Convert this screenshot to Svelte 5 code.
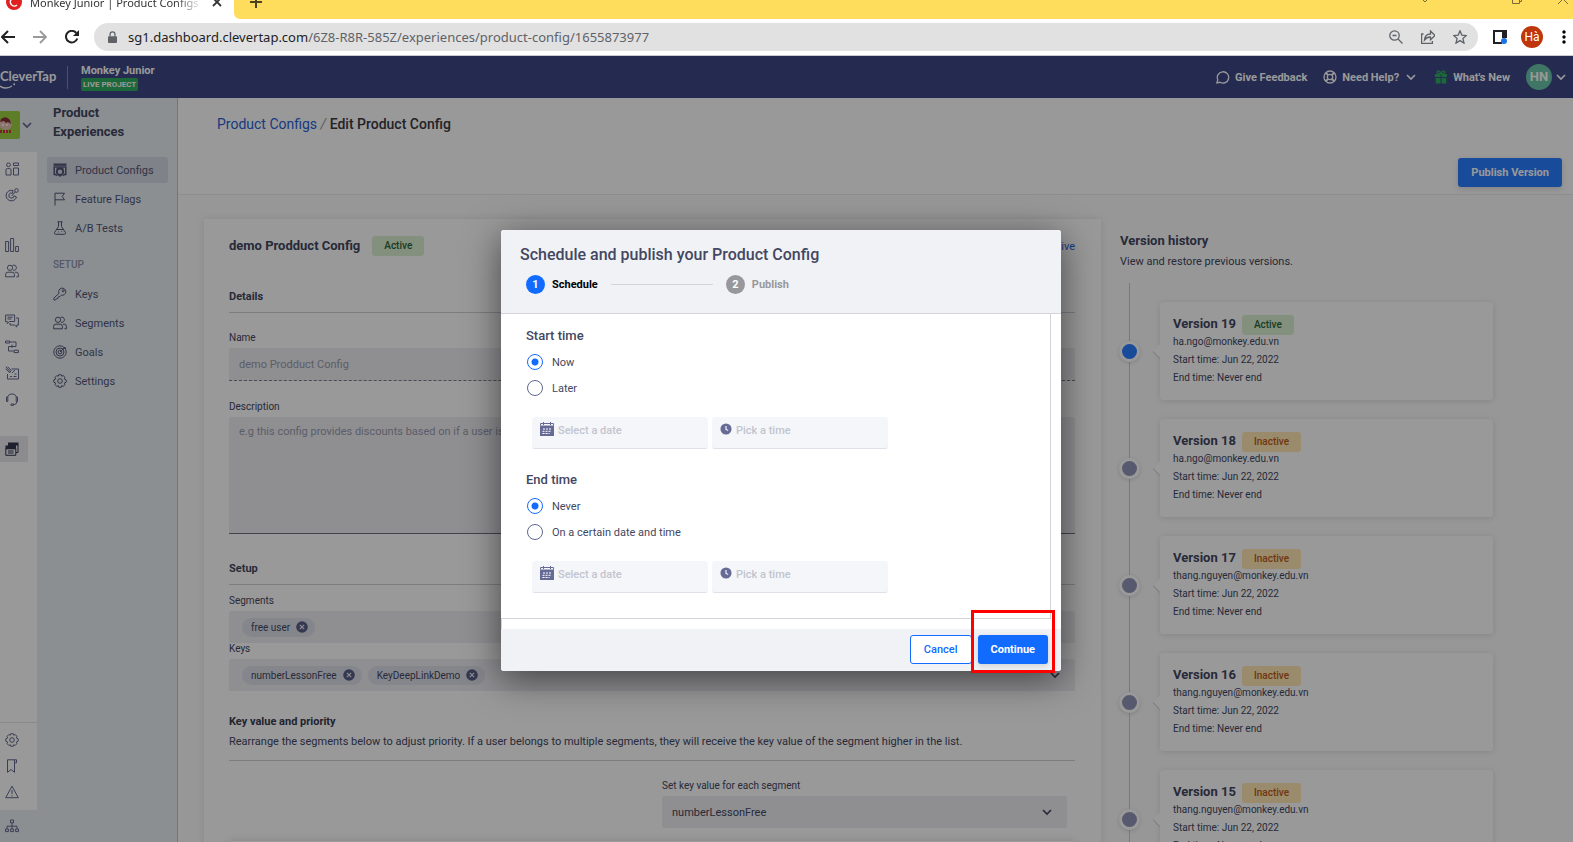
<script>
  const railGroups = [
    ['dash', 'target'],
    ['bars', 'users'],
    ['chat', 'journey', 'campaign', 'headset'],
    ['pages']
  ];
  const railBottom = ['gear', 'bookmark', 'warning'];

  const productLinks = [
    { icon: 'config', label: 'Product Configs' },
    { icon: 'flag', label: 'Feature Flags' },
    { icon: 'flask', label: 'A/B Tests' }
  ];
  const setupLinks = [
    { icon: 'key', label: 'Keys' },
    { icon: 'users', label: 'Segments' },
    { icon: 'goals', label: 'Goals' },
    { icon: 'gear', label: 'Settings' }
  ];

  const versions = [
    { number: 19, active: true, email: 'ha.ngo@monkey.edu.vn' },
    { number: 18, active: false, email: 'ha.ngo@monkey.edu.vn' },
    { number: 17, active: false, email: 'thang.nguyen@monkey.edu.vn' },
    { number: 16, active: false, email: 'thang.nguyen@monkey.edu.vn' },
    { number: 15, active: false, email: 'thang.nguyen@monkey.edu.vn' }
  ];

  let segments = $state(['free user']);
  let keys = $state(['numberLessonFree', 'KeyDeepLinkDemo']);
  let start = $state('now');
  let end = $state('never');
</script>

{#snippet icon(name)}
  <svg class="icon" viewBox="0 0 14 14" aria-hidden="true">
    {#if name === 'dash'}
      <circle cx="3.5" cy="2.8" r="1.9" /><path d="M1 13V8q0-1.500 1.500-1.500h2Q6 6.500 6 8v5zM8.500 1h5v2.500h-5zM8.500 6h5v7h-5z" />
    {:else if name === 'target'}
      <path d="M8 2.500A5.300 5.300 0 1 0 11.500 9L9 7.800A2.600 2.600 0 1 1 7.500 5.200zM6.500 8l4-4.300" /><circle cx="11.500" cy="2.500" r="1.800" />
    {:else if name === 'bars'}
      <path d="M.6 3.500h3v10h-3zM5.600.5h3v13h-3zM10.600 8.500h3v5h-3z" />
    {:else if name === 'users'}
      <circle cx="5" cy="3.8" r="2.600" /><path d="M7.500 1.500a2.600 2.600 0 1 1 .5 4.700M.6 12.800v-2.300q0-2.300 2.300-2.300h4.200q2.300 0 2.300 2.300v2.300zM10 8.200h1.200q2.200 0 2.200 2.300v2.300h-2" />
    {:else if name === 'chat'}
      <path d="M.6 1h9v6.500H4.500l-2.300 2v-2H.6zM2.500 3.200h5M2.500 5h4M11 4h2.400v7h-1.600v2l-2.300-2H5V9" />
    {:else if name === 'journey'}
      <path d="M.6 1h4v2h-4zM4.600 2H11v4.500H3.500V11h5M9 10.200h4.400v2.400H9zM7 4.500V8M5.500 6.500h3" />
    {:else if name === 'campaign'}
      <path d="M6.500 3h7v10h-11V8M.8.800l5 5.500M2.500.6l3.700 3.900L4.500 6.600.6 2.700M7 7l3-3M5 10.500h2M8.500 10.500h3M9.500 8h2" />
    {:else if name === 'headset'}
      <path d="M2.500 5A4.800 4.800 0 0 1 11.500 5M2.800 5H1.500v4.500h1.300zM12.500 5h-1.300v4.500h1.300zM12 9.500q0 3-3.500 3.200M6 12h2.500v1.300H6z" />
    {:else if name === 'pages'}
      <path class="solid" d="M3 .5h10.500v3H3zM.5 3.500H11v3.700H.5z" /><path d="M.8 6.500h10v6.800H.8zM13 3v7.500h-2M3 9h5.500M3 11h5.500" />
    {:else if name === 'gear'}
      <path d="M5.800.7h2.400l.5 1.500 1.500-.6 1.800 1.800-.7 1.500 1.900.9v2.400l-1.900.9.7 1.500-1.800 1.800-1.500-.7-.5 1.600H5.800l-.5-1.600-1.500.7L2 10.600l.7-1.500L.8 8.200V5.800l1.900-.9L2 3.400l1.800-1.800 1.500.6z" /><circle cx="7" cy="7" r="2.300" />
    {:else if name === 'bookmark'}
      <path d="M2.500.8h9v3h-2v9.500L6 10.500l-3.500 2.800zM9.500.8v3" />
    {:else if name === 'warning'}
      <path d="M7 1.200l6.300 11.500H.7zM7 5v4M7 10.200v1.200" />
    {:else if name === 'tree'}
      <path d="M5.500 1h3v2.800h-3zM7 3.800V10M2 10V7.200h10V10M.6 10h2.800v2.600H.6zM5.600 10h2.800v2.600H5.600zM10.600 10h2.800v2.600h-2.800z" />
    {:else if name === 'config'}
      <path class="solid" d="M.5.500h13v2.300H.5z" /><path d="M3 11.500H1.200V4h11.600v7.500H11" stroke-width="1.500" /><circle cx="7" cy="8.800" r="3.200" stroke-width="2" /><path d="M3.500 5.500h7M7 12v1.800M4 11.800l-1 1M10 11.800l1 1" stroke-width="1.500" />
    {:else if name === 'flag'}
      <path d="M2 13.500V1M2 1.200h9.500L9.200 4.500l2.300 3.300H2" />
    {:else if name === 'flask'}
      <path d="M4.500.8h5M5.500.8v4.700l-4 6q-.6 1.700 1.200 1.800h8.600q1.800-.1 1.200-1.800l-4-6V.8M3.600 8.500h6.800M5 11h.8M8.500 10.500h.8" />
    {:else if name === 'key'}
      <path d="M6 6.300A3.600 3.600 0 1 1 8.300 8.200L7 9.500 5.500 9.800 5 11.300l-1.500.4L2.500 13H.9v-1.900z" /><circle cx="10.200" cy="3.800" r="1" />
    {:else if name === 'goals'}
      <circle cx="7" cy="7" r="6.200" /><circle cx="7" cy="7" r="4" /><circle cx="7" cy="7" r="1.900" /><path d="M7 7l5-5M10.500 3.500l2.700-.7" />
    {:else if name === 'chevron'}
      <path d="M3 5l4 4 4-4" stroke-width="1.700" />
    {:else if name === 'remove'}
      <circle class="solid" cx="7" cy="7" r="6.800" /><path class="cross" d="M4.500 4.500l5 5M9.500 4.500l-5 5" />
    {:else if name === 'calendar'}
      <path class="solid" d="M0 3.500h14V14H0z" /><path d="M.5 3.500V1.500h13v2M3.500 0v3M10.500 0v3" />
      <path class="dots" d="M3 7h9M2.500 9.300h9M2.500 11.500h7" />
    {:else if name === 'clock'}
      <circle class="solid" cx="7" cy="7" r="6.500" /><path class="cross" d="M7 3.500V7.500l2.500 1.200" />
    {/if}
  </svg>
{/snippet}

{#snippet schedule(name)}
  <div class="pickers">
    <label class="picker">
      <span class="picker-icon">{@render icon('calendar')}</span>
      <input type="text" placeholder="Select a date" aria-label="{name} date" />
    </label>
    <label class="picker">
      <span class="picker-icon small">{@render icon('clock')}</span>
      <input type="text" placeholder="Pick a time" aria-label="{name} hour" />
    </label>
  </div>
{/snippet}

{#snippet tag(text)}
  <span class="tag">{text}<button class="tag-remove" aria-label="Remove {text}">{@render icon('remove')}</button></span>
{/snippet}

<div class="screen">
  <div class="tabstrip">
    <div class="tab">
      <svg class="favicon" viewBox="0 0 16 16"><circle cx="8" cy="8" r="8" fill="#e02020" /><path d="M11 5a4 4 0 1 0 0 6" fill="none" stroke="#fff" stroke-width="1.500" /></svg>
      <span class="tab-title">Monkey Junior | Product Configs</span>
      <button class="tab-close" aria-label="Close tab"><svg viewBox="0 0 10 10"><path d="M1 1l8 8M9 1l-8 8" stroke="#333" stroke-width="1.800" /></svg></button>
    </div>
    <div class="tab-rest">
      <button class="tab-new" aria-label="New tab"><svg viewBox="0 0 12 12"><path d="M6 0v12M0 6h12" stroke="#4c4320" stroke-width="2" /></svg></button>
      <div class="window-buttons">
        <svg viewBox="0 0 10 10"><path d="M1 4l4 4 4-4" /></svg>
        <svg viewBox="0 0 10 10"></svg>
        <svg viewBox="0 0 10 10"><path d="M.5 2.500h7v7h-7zM2.500 2.500v-2h7v7h-2" /></svg>
        <svg viewBox="0 0 10 10"><path d="M0 0l10 10M10 0L0 10" /></svg>
      </div>
    </div>
  </div>

  <div class="toolbar">
    <div class="nav-buttons">
      <button aria-label="Back"><svg viewBox="0 0 14 14"><path d="M14 7H1M7 1L1 7l6 6" fill="none" stroke="#222" stroke-width="2" /></svg></button>
      <button aria-label="Forward"><svg viewBox="0 0 14 14"><path d="M0 7h13M7 1l6 6-6 6" fill="none" stroke="#999" stroke-width="1.800" /></svg></button>
      <button aria-label="Reload"><svg viewBox="0 0 14 14"><path d="M12.300 8.500A5.800 5.800 0 1 1 11.300 3" fill="none" stroke="#222" stroke-width="2" /><path d="M14 0v6H8z" fill="#222" /></svg></button>
    </div>
    <div class="address">
      <svg class="lock" viewBox="0 0 10 14"><path d="M1 5.500h8q1 0 1 1V12q0 1-1 1H1q-1 0-1-1V6.500q0-1 1-1z" fill="#5f6368" /><path d="M2.300 6V3.500a2.700 2.700 0 0 1 5.400 0V6" fill="none" stroke="#5f6368" stroke-width="1.400" /></svg>
      <span class="url"><b>sg1.dashboard.clevertap.com</b>/6Z8-R8R-585Z/experiences/product-config/1655873977</span>
      <svg class="bar-icon" viewBox="0 0 14 14"><circle cx="5.500" cy="5.500" r="4.700" /><path d="M9 9l4.500 4.500M3.500 5.500h4" /></svg>
      <svg class="bar-icon" viewBox="0 0 14 14"><path d="M2.500 4H.6v9.400h10.800v-2.500M3.500 10q.5-6 6-6V1l4.500 4.500-4.500 4.200V7q-3.500-.2-6 3z" /></svg>
      <svg class="bar-icon" viewBox="0 0 14 14"><path d="M7 .8l1.800 4.300 4.600.4-3.500 3 1.100 4.600-4-2.500-4 2.500 1.100-4.600-3.500-3 4.600-.4z" /></svg>
    </div>
    <svg class="panel" viewBox="0 0 14 14"><path d="M0 0h14v14H0z" fill="#202124" /><path d="M2 2h7v10H2z" fill="#fff" /><path d="M9 8h5v6H9z" fill="#fff" /><circle cx="11" cy="11" r="3" fill="#1a73e8" /></svg>
    <button class="profile">Hà</button>
    <button class="dots-menu" aria-label="Menu"><svg viewBox="0 0 4 14"><circle cx="2" cy="2" r="1.700" /><circle cx="2" cy="7" r="1.700" /><circle cx="2" cy="12" r="1.700" /></svg></button>
  </div>

  <div class="app">
    <header class="topbar">
      <a class="logo" href="#home">
        <span>CleverTap</span>
        <svg viewBox="0 0 16 6"><path d="M0 3q6 4 12 0" fill="none" stroke="#fff" stroke-width="1.500" /><circle cx="14.200" cy="1.300" r="1" fill="#fff" /></svg>
      </a>
      <div class="project">
        <strong>Monkey Junior</strong>
        <span class="live">LIVE PROJECT</span>
      </div>
      <nav class="top-links">
        <a href="#feedback"><svg viewBox="0 0 14 14"><path d="M1.800 9.800A5.700 5.700 0 1 1 4 12.300L.8 13z" /></svg>Give Feedback</a>
        <a href="#help"><svg viewBox="0 0 14 14"><circle cx="7" cy="7" r="6" /><circle cx="7" cy="7" r="2.700" /><path d="M2.800 2.800l2.300 2.300M11.200 2.800L8.900 5.100M2.800 11.200l2.300-2.300M11.200 11.200L8.900 8.900" stroke-width="2" /></svg>Need Help?<span class="caret">{@render icon('chevron')}</span></a>
        <a href="#new"><svg class="gift" viewBox="0 0 14 14"><path class="fill" d="M1 4h5.500v3H1zM7.500 4H13v3H7.500zM1.700 8h4.800v5.500H1.700zM7.500 8h4.800v5.500H7.500z" /><path d="M7 3.800Q2 3.500 3.500 1.200 5.500 0 7 3.800 8.500 0 10.500 1.200 12 3.500 7 3.800z" /></svg>What's New</a>
        <button class="account"><span class="avatar">HN</span><span class="caret">{@render icon('chevron')}</span></button>
      </nav>
    </header>

    <div class="columns">
      <nav class="rail">
        <button class="brand" aria-label="Switch app">
          <svg class="monkey" viewBox="0 0 20 28"><path d="M0 0h18q2 0 2 2v24q0 2-2 2H0z" fill="#9bd040" /><path d="M0 10q4-6 10-1l2 5q-2 5-6 5-4 0-6-3z" fill="#e8c4b5" /><path d="M1 8q5-4 9 1l1 4-3-2-2 1-2-2-4 1z" fill="#8d3038" /><circle cx="3" cy="14" r="1" fill="#fff" /><circle cx="7" cy="14" r="1" fill="#fff" /><path d="M0 20.500h12" stroke="#d6304a" stroke-width="3" stroke-dasharray="2 1" /></svg>
          <span class="caret">{@render icon('chevron')}</span>
        </button>
        <div class="rail-main">
          {#each railGroups as group}
            <div class="rail-group">
              {#each group as name}
                <a class="rail-link" class:current={name === 'pages'} href="#{name}" aria-label={name}>{@render icon(name)}</a>
              {/each}
            </div>
          {/each}
        </div>
        <div class="rail-bottom">
          {#each railBottom as name}
            <a class="rail-link" href="#{name}" aria-label={name}>{@render icon(name)}</a>
          {/each}
        </div>
        <div class="rail-foot"><a class="rail-link" href="#tree" aria-label="tree">{@render icon('tree')}</a></div>
      </nav>

      <nav class="subnav">
        <h2>Product Experiences</h2>
        {#each productLinks as link, i}
          <a class="sub-link" class:selected={i === 0} href="#{link.icon}">{@render icon(link.icon)}{link.label}</a>
        {/each}
        <h3>SETUP</h3>
        {#each setupLinks as link}
          <a class="sub-link" href="#{link.icon}">{@render icon(link.icon)}{link.label}</a>
        {/each}
      </nav>

      <main>
        <div class="page-head">
          <div class="crumbs"><a href="#configs">Product Configs</a> <i>/</i> <span>Edit Product Config</span></div>
          <button class="primary publish">Publish Version</button>
        </div>
        <div class="content">
          <section class="card">
            <div class="card-title">
              <h1>demo Prodduct Config</h1>
              <span class="badge">Active</span>
              <a href="#archive">Archive</a>
            </div>
            <h4>Details</h4>
            <label class="field-label" for="name">Name</label>
            <input id="name" class="name" value="demo Prodduct Config" disabled />
            <label class="field-label" for="description">Description</label>
            <textarea id="description" placeholder="e.g this config provides discounts based on if a user is new"></textarea>
            <h4 class="setup">Setup</h4>
            <div class="tag-label">Segments</div>
            <div class="tags">
              {#each segments as item}{@render tag(item)}{/each}
            </div>
            <div class="tag-label">Keys</div>
            <div class="tags">
              {#each keys as item}{@render tag(item)}{/each}
              <span class="tags-caret">{@render icon('chevron')}</span>
            </div>
            <div class="priority">
              <h5>Key value and priority</h5>
              <p>Rearrange the segments below to adjust priority. If a user belongs to multiple segments, they will receive the key value of the segment higher in the list.</p>
            </div>
            <div class="key-value">
              <label class="field-label" for="key-select">Set key value for each segment</label>
              <div class="select">
                <select id="key-select">
                  <option>numberLessonFree</option>
                </select>
                {@render icon('chevron')}
              </div>
            </div>
            <div class="priority-list"></div>
          </section>

          <aside>
            <h1>Version history</h1>
            <p>View and restore previous versions.</p>
            <ol>
              {#each versions as version}
                <li>
                  <span class="dot" class:on={version.active}></span>
                  <div class="version">
                    <div class="version-title">
                      <h2>Version {version.number}</h2>
                      <span class="badge" class:inactive={!version.active}>{version.active ? 'Active' : 'Inactive'}</span>
                    </div>
                    <div>{version.email}</div>
                    <div>Start time: Jun 22, 2022</div>
                    <div>End time: Never end</div>
                  </div>
                </li>
              {/each}
            </ol>
          </aside>
        </div>
      </main>
    </div>

    <div class="overlay">
      <div class="modal" role="dialog" aria-labelledby="modal-title">
        <div class="modal-head">
          <h1 id="modal-title">Schedule and publish your Product Config</h1>
          <div class="steps">
            <span class="step-number">1</span><b>Schedule</b>
            <span class="step-line"></span>
            <span class="step-number next">2</span><b class="next-label">Publish</b>
          </div>
        </div>
        <div class="modal-body">
          <fieldset>
            <legend>Start time</legend>
            <label class="radio"><input type="radio" value="now" bind:group={start} />Now</label>
            <label class="radio"><input type="radio" value="later" bind:group={start} />Later</label>
            {@render schedule('Start')}
          </fieldset>
          <fieldset>
            <legend>End time</legend>
            <label class="radio"><input type="radio" value="never" bind:group={end} />Never</label>
            <label class="radio"><input type="radio" value="date" bind:group={end} />On a certain date and time</label>
            {@render schedule('End')}
          </fieldset>
        </div>
        <div class="modal-gap"></div>
        <div class="modal-foot">
          <button class="cancel">Cancel</button>
          <span class="highlight"><button class="primary">Continue</button></span>
        </div>
      </div>
    </div>
  </div>
</div>

<style>
  :global(body) {
    overflow: hidden;
  }
  .screen {
    height: 100vh;
    display: flex;
    flex-direction: column;
    overflow: hidden;
    background: #fff;
    color: #434761;
    font-family: Roboto, "Liberation Sans", sans-serif;
    font-size: 11px;
  }
  .screen * {
    box-sizing: border-box;
  }
  button,
  input,
  select,
  textarea {
    font: inherit;
    color: inherit;
    border: 0;
    margin: 0;
    padding: 0;
    background: none;
  }
  button {
    display: flex;
    align-items: center;
    justify-content: center;
    cursor: pointer;
  }
  h1, h2, h3, h4, h5, p, ol, fieldset {
    margin: 0;
    padding: 0;
    border: 0;
  }
  a {
    color: inherit;
    text-decoration: none;
  }
  svg {
    display: block;
    flex: none;
  }
  .icon {
    width: 14px;
    height: 14px;
    fill: none;
    stroke: currentColor;
    stroke-width: 1;
  }
  .icon .solid {
    fill: currentColor;
    stroke: none;
  }
  .icon .cross {
    stroke: #e8e8f0;
    stroke-width: 1.500;
  }
  .icon .dots {
    stroke: #fff;
    stroke-width: 1;
    stroke-dasharray: 2 1;
  }

  /* browser chrome */
  .tabstrip {
    flex: none;
    height: 19px;
    display: flex;
    align-items: flex-end;
    background: #fff;
    font-family: "Noto Sans", sans-serif;
  }
  .tab {
    width: 234px;
    height: 34px;
    padding: 0 10px 0 6px;
    display: flex;
    align-items: center;
    background: #fff;
  }
  .favicon {
    width: 16px;
    height: 16px;
  }
  .tab-title {
    flex: 1;
    margin-left: 8px;
    overflow: hidden;
    white-space: nowrap;
    color: #333;
    mask-image: linear-gradient(to right, #000 85%, transparent);
  }
  .tab-close {
    margin: 0 2px 0 10px;
  }
  .tab-close svg {
    width: 10px;
    height: 10px;
  }
  .tab-rest {
    flex: 1;
    height: 34px;
    display: flex;
    align-items: center;
    border-bottom-left-radius: 6px;
    background: #ffdd5c;
  }
  .tab-new {
    padding: 0 16px;
  }
  .tab-new svg {
    width: 12px;
    height: 12px;
  }
  .window-buttons {
    margin-left: auto;
    display: flex;
    align-items: center;
    gap: 36px;
    padding: 0 5px 6px 0;
  }
  .window-buttons svg {
    width: 10px;
    height: 10px;
    fill: none;
    stroke: #7a6c35;
  }
  .toolbar {
    flex: none;
    height: 37px;
    padding: 0 7px 0 0;
    display: flex;
    align-items: center;
    border-bottom: 1px solid #c9ccd2;
  }
  .nav-buttons {
    display: flex;
    gap: 18px;
    padding: 0 15px 0 1px;
  }
  .nav-buttons svg {
    width: 14px;
    height: 14px;
  }
  .address {
    flex: 1;
    height: 28px;
    padding: 0 11px 0 14px;
    display: flex;
    align-items: center;
    border-radius: 14px;
    background: #e1e1e1;
  }
  .lock {
    width: 9px;
    height: 13px;
  }
  .url {
    flex: 1;
    margin-left: 11px;
    font-family: "Noto Sans", sans-serif;
    font-size: 13px;
    color: #5f6368;
  }
  .url b {
    font-weight: 400;
    color: #202124;
  }
  .bar-icon {
    width: 14px;
    height: 14px;
    margin-left: 18px;
    fill: none;
    stroke: #5f6368;
    stroke-width: 1.300;
  }
  .panel {
    width: 14px;
    height: 14px;
    margin: 0 14px 0 15px;
  }
  .profile {
    width: 22px;
    height: 22px;
    border-radius: 50%;
    background: #bf360c;
    color: #fff;
    font-size: 12px;
  }
  .dots-menu {
    margin-left: 19px;
  }
  .dots-menu svg {
    width: 4px;
    height: 14px;
  }

  /* app header */
  .app {
    position: relative;
    flex: 1;
    min-height: 0;
    display: flex;
    flex-direction: column;
  }
  .topbar {
    flex: none;
    height: 42px;
    padding-right: 5px;
    display: flex;
    align-items: center;
    background: #3d4786;
    color: #fff;
  }
  .logo {
    width: 68px;
    padding-top: 4px;
    border-right: 1px solid #8088b5;
    font-family: Lato, sans-serif;
    font-size: 13px;
    font-weight: 700;
    line-height: 13px;
  }
  .logo svg {
    width: 16px;
    height: 6px;
  }
  .project {
    flex: 1;
    margin-left: 13px;
    display: flex;
    flex-direction: column;
    align-items: flex-start;
    line-height: 15px;
  }
  .live {
    padding: 0 2px;
    border-radius: 2px;
    background: #2fae62;
    font-size: 8px;
    font-weight: 700;
    line-height: 13px;
  }
  .top-links {
    display: flex;
    align-items: center;
    gap: 16px;
    font-weight: 700;
  }
  .top-links a {
    display: flex;
    align-items: center;
    gap: 5px;
  }
  .top-links a > svg {
    width: 14px;
    height: 14px;
    fill: none;
    stroke: currentColor;
    stroke-width: 1.300;
  }
  .top-links .gift {
    stroke: #2fae62;
  }
  .gift .fill {
    fill: #2fae62;
    stroke: none;
  }
  .account {
    gap: 2px;
  }
  .avatar {
    width: 26px;
    height: 26px;
    border-radius: 50%;
    background: #6cc5a8;
    font-size: 13px;
    line-height: 26px;
  }

  /* left navigation */
  .columns {
    flex: 1;
    min-height: 0;
    display: flex;
  }
  .rail {
    width: 37px;
    display: flex;
    flex-direction: column;
    color: #62678c;
  }
  .brand {
    height: 54px;
    justify-content: flex-start;
    background: #e8eef3;
  }
  .monkey {
    width: 20px;
    height: 28px;
  }
  .rail-main {
    flex: 1;
    padding-top: 4px;
    display: flex;
    flex-direction: column;
    gap: 24px;
  }
  .rail-link {
    width: 28px;
    height: 26px;
    padding-left: 5px;
    display: flex;
    align-items: center;
  }
  .rail-link.current {
    background: #e9e9ee;
    color: #32364e;
  }
  .rail-bottom {
    padding: 4px 0 5px;
    border-top: 1px solid #e4e5ea;
  }
  .rail-foot {
    height: 32px;
    padding-top: 3px;
    background: #e8eef3;
  }
  .subnav {
    width: 141px;
    padding: 5px 9px 0 10px;
    border-right: 1px solid #c2c3cf;
    background: #e8eef3;
    color: #535876;
  }
  .subnav h2 {
    padding: 0 40px 16px 6px;
    font-size: 13px;
    line-height: 19px;
    color: #434761;
  }
  .subnav h3 {
    padding: 13px 6px 8px;
    font-size: 10px;
    font-weight: 500;
    line-height: 16px;
    color: #9094ae;
  }
  .sub-link {
    height: 26px;
    margin-bottom: 3px;
    padding-left: 6px;
    display: flex;
    align-items: center;
    gap: 8px;
    border-radius: 3px;
  }
  .sub-link.selected {
    background: #d4d9e5;
  }

  /* page */
  main {
    flex: 1;
    min-width: 0;
    background: #fcfcfc;
  }
  .page-head {
    height: 97px;
    padding: 16px 11px 0 39px;
    background: #fff;
    border-bottom: 1px solid #ececf0;
  }
  .crumbs {
    font-size: 14px;
    line-height: 20px;
  }
  .crumbs a {
    color: #2a5fd8;
  }
  .crumbs i {
    color: #9a9a9a;
  }
  .crumbs span {
    color: #3a3a42;
    font-weight: 500;
  }
  .primary {
    height: 29px;
    padding: 0 13px;
    border-radius: 3px;
    background: #126bff;
    color: #fff;
    font-weight: 700;
    box-shadow: 0 2px 6px rgba(0, 0, 0, 0.15);
  }
  .publish {
    margin: 24px 0 0 auto;
    background: #297dff;
  }
  .content {
    display: flex;
    padding: 24px 80px 0 26px;
  }
  .card {
    flex: 1;
    min-width: 0;
    padding: 17px 26px 0 25px;
    background: #fff;
    box-shadow: 0 0 8px rgba(0, 0, 0, 0.1);
  }
  .card-title {
    height: 20px;
    display: flex;
    align-items: center;
    gap: 12px;
  }
  .card-title a {
    margin-left: auto;
    color: #2a5fd8;
  }
  .card-title h1,
  aside h1 {
    font-size: 13px;
    line-height: 18px;
  }
  .badge {
    height: 20px;
    padding: 0 12px;
    border-radius: 3px;
    background: #dcf0d2;
    color: #28643a;
    font-size: 10px;
    font-weight: 500;
    line-height: 20px;
  }
  .badge.inactive {
    background: #ffe8b5;
    color: #bd5a14;
  }
  .card h4 {
    margin: 32px 0 17px;
    padding-bottom: 6px;
    border-bottom: 1px solid #cfd0d6;
    font-size: 11px;
    line-height: 18px;
  }
  .card h4.setup {
    margin: 26px 0 10px;
  }
  .field-label {
    display: block;
    font-size: 10px;
    line-height: 16px;
    margin-bottom: 2px;
  }
  .name {
    display: block;
    width: 100%;
    height: 33px;
    padding: 0 10px;
    border-bottom: 1px dashed #7c7e8c;
    border-radius: 3px 3px 0 0;
    background: #eeeef4;
    color: #9a9cab;
    margin-bottom: 18px;
  }
  textarea {
    display: block;
    width: 100%;
    height: 117px;
    padding: 8px 10px;
    border-bottom: 1px solid #6f7180;
    border-radius: 3px 3px 0 0;
    background: #eeeef4;
    resize: none;
  }
  textarea::placeholder {
    color: #9a9cab;
  }
  .tag-label {
    font-size: 10px;
    line-height: 12px;
    margin-bottom: 4px;
  }
  .tags {
    height: 32px;
    padding: 0 13px;
    display: flex;
    align-items: center;
    gap: 6px;
    background: #eeeef4;
    border-radius: 3px 3px 0 0;
  }
  .tag {
    height: 19px;
    padding: 0 7px 0 9px;
    display: flex;
    align-items: center;
    gap: 6px;
    border-radius: 10px;
    background: #dee0ea;
    font-size: 10px;
  }
  .tag-remove .icon {
    width: 12px;
    height: 12px;
    color: #585e88;
  }
  .tags-caret {
    margin-left: auto;
  }
  .priority {
    padding: 21px 0 8px;
    border-bottom: 1px solid #cfd0d6;
    line-height: 20px;
  }
  .priority h5 {
    font-size: 11px;
    color: #383b4e;
  }
  .key-value {
    margin: 17px 8px 0 433px;
  }
  .select {
    height: 32px;
    padding-right: 13px;
    display: flex;
    align-items: center;
    background: #eeeef4;
    border-radius: 3px;
  }
  select {
    flex: 1;
    appearance: none;
    padding-left: 10px;
  }
  .priority-list {
    height: 60px;
    margin: 13px 0 0;
    box-shadow: 0 0 8px rgba(0, 0, 0, 0.15);
  }

  /* version history */
  aside {
    width: 373px;
    margin: 13px 0 0 19px;
  }
  aside p {
    margin-top: 3px;
    line-height: 18px;
  }
  ol {
    margin: 12px 0 0 9px;
    padding-top: 19px;
    border-left: 1px solid #c9cad2;
    list-style: none;
  }
  li {
    height: 98px;
    margin-bottom: 19px;
    display: flex;
    align-items: center;
  }
  .dot {
    width: 21px;
    height: 21px;
    margin-left: -11px;
    border: 3px solid #fff;
    border-radius: 50%;
    background: #9297b8;
    box-shadow: 0 1px 4px rgba(0, 0, 0, 0.15);
  }
  .dot.on {
    background: #297dff;
  }
  .version {
    position: relative;
    flex: 1;
    height: 98px;
    margin-left: 20px;
    padding: 13px 13px 0;
    background: #fff;
    border-radius: 3px;
    box-shadow: 0 1px 6px rgba(0, 0, 0, 0.12);
    font-size: 10px;
    line-height: 18px;
  }
  .version::before {
    content: "";
    position: absolute;
    left: -5px;
    top: 44px;
    width: 10px;
    height: 10px;
    transform: rotate(45deg);
    background: #fff;
    border-bottom: 1px solid #cfcfd4;
  }
  .version-title {
    height: 18px;
    display: flex;
    gap: 6px;
  }
  .version-title h2 {
    font-size: 13px;
    line-height: 18px;
  }

  /* dialog */
  .overlay {
    position: absolute;
    inset: 0;
    display: flex;
    justify-content: center;
    align-items: flex-start;
    padding: 174px 11px 0 0;
    background: rgba(0, 0, 0, 0.4);
  }
  .modal {
    width: 560px;
    border-radius: 3px;
    background: #fff;
    box-shadow: 0 8px 36px rgba(0, 0, 0, 0.55);
  }
  .modal-head {
    height: 84px;
    padding: 14px 19px 0;
    border-bottom: 1px solid #d3d4da;
    border-radius: 3px 3px 0 0;
    background: #f1f2f6;
  }
  .modal-head h1 {
    font-size: 16px;
    font-weight: 500;
    line-height: 22px;
  }
  .steps {
    margin: 9px 0 0 6px;
    display: flex;
    align-items: center;
    color: #000;
  }
  .step-number {
    width: 19px;
    height: 19px;
    margin-right: 7px;
    border-radius: 50%;
    background: #126bff;
    color: #fff;
    font-weight: 700;
    line-height: 19px;
    text-align: center;
  }
  .step-number.next {
    background: #98989c;
  }
  .next-label {
    color: #98989c;
  }
  .step-line {
    width: 102px;
    height: 1px;
    margin: 0 13px;
    background: #d3d4da;
  }
  .modal-body {
    margin-right: 10px;
    height: 305px;
    padding: 13px 24px 0 25px;
    border-right: 1px solid #d3d4da;
    border-bottom: 1px solid #d3d4da;
  }
  fieldset {
    height: 144px;
  }
  legend {
    padding: 0;
    font-size: 13px;
    font-weight: 500;
    line-height: 18px;
    margin-bottom: 4px;
  }
  .radio {
    height: 26px;
    padding-left: 1px;
    display: flex;
    align-items: center;
    gap: 9px;
  }
  .radio input {
    appearance: none;
    width: 16px;
    height: 16px;
    border: 1px solid #62678c;
    border-radius: 50%;
  }
  .radio input:checked {
    border-color: #126bff;
    background: radial-gradient(circle, #126bff 3px, #fff 4px);
  }
  .pickers {
    display: flex;
    gap: 4px;
    padding: 16px 0 0 6px;
  }
  .picker {
    width: 176px;
    height: 32px;
    padding: 0 8px 4px;
    display: flex;
    align-items: center;
    gap: 4px;
    border-bottom: 1px solid #dfe1ea;
    border-radius: 3px;
    background: #f5f6fa;
  }
  .picker-icon {
    color: #666b96;
    padding-bottom: 3px;
  }
  .picker-icon.small .icon {
    width: 12px;
    height: 12px;
  }
  .picker input {
    flex: 1;
    min-width: 0;
  }
  .picker input::placeholder {
    color: #c2c4ce;
    opacity: 1;
    font-weight: 500;
  }
  .modal-gap {
    height: 10px;
    border-left: 1px solid #d3d4da;
  }
  .modal-foot {
    height: 42px;
    padding: 0 13px 2px 0;
    display: flex;
    align-items: center;
    justify-content: flex-end;
    gap: 6px;
    border-radius: 0 0 3px 3px;
    background: #f1f2f6;
  }
  .cancel {
    height: 29px;
    padding: 0 13px;
    border: 1px solid #126bff;
    border-radius: 3px;
    background: #fff;
    color: #126bff;
    font-weight: 500;
  }
  .highlight {
    position: relative;
  }
  .highlight::after {
    content: "";
    position: absolute;
    inset: -25px -7px -9px -7px;
    border: 3px solid #f00;
    pointer-events: none;
  }
</style>
